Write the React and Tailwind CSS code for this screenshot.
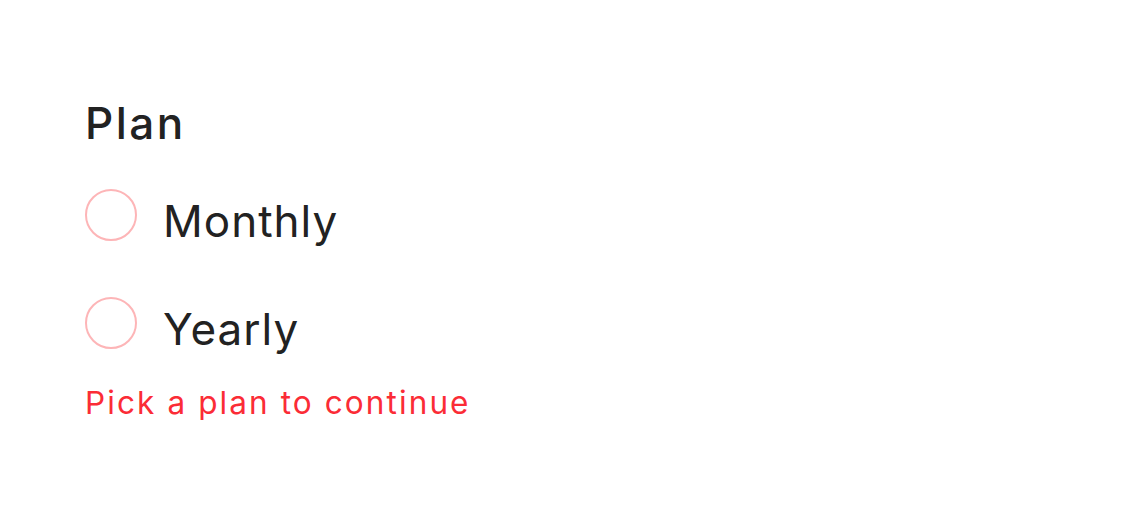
export default function App() {
  const font = { fontFamily: 'Inter, "Noto Sans", sans-serif' };
  return (
    <div className="w-[1128px] h-[510px] bg-white" style={font}>
      <div className="flex flex-col pl-[85px] pt-[101px]">
        <div className="text-[44px] leading-[44px] font-medium tracking-[2.5px] text-[#222222]">Plan</div>
        <div className="mt-[44px] flex flex-col gap-[50px]">
          {["Monthly", "Yearly"].map((l) => (
            <label key={l} className="flex items-start gap-[26px]">
              <span className="w-[52px] h-[52px] rounded-full border-2 border-[#fdb5b7] bg-white shrink-0" />
              <span className="mt-[6px] text-[44px] leading-[52px] tracking-[1px] text-[#222222]">{l}</span>
            </label>
          ))}
        </div>
        <div className="mt-[33px] text-[31.5px] leading-[30px] tracking-[2.1px] text-[#fb2c36]">Pick a plan to continue</div>
      </div>
    </div>
  );
}
